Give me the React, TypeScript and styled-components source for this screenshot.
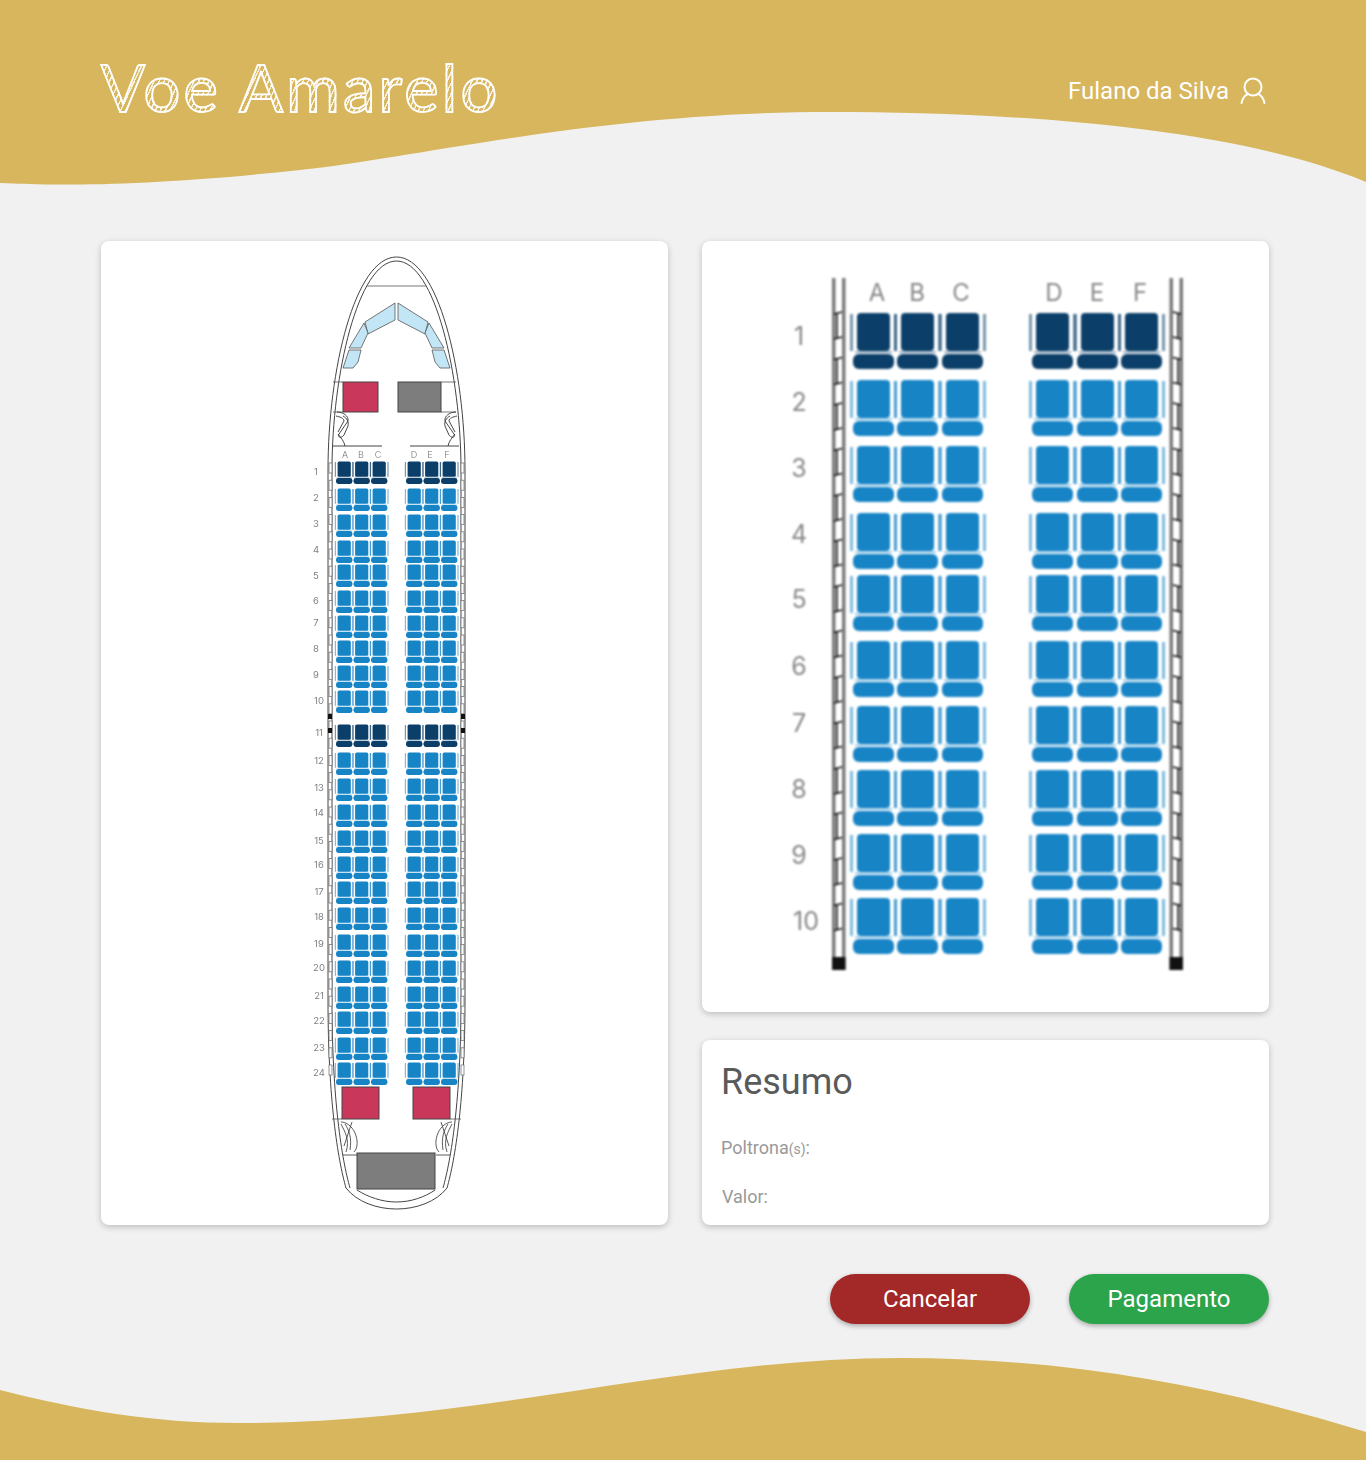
import React from 'react';
import styled, { createGlobalStyle } from 'styled-components';

const BLUE = '#1784c6';
const NAVY = '#0b3f69';

const CUSHION_BIG = [853, 897, 942, 1032, 1077, 1121];
const ROWS_BIG = [314, 381, 447, 514, 576, 642, 707, 771, 835, 899];
const LABEL_BIG = [336, 402, 468, 534, 599, 666, 723, 789, 855, 921];
const LETTERS_BIG: Array<[string, number]> = [['A', 877], ['B', 917], ['C', 961], ['D', 1054], ['E', 1097], ['F', 1140]];

const CUSHION_SMALL = [336, 353.5, 371, 406, 423.5, 441];
const ROWS_SMALL = [462, 489, 515, 541, 565, 591, 616, 641, 666, 691, 725, 753, 779, 805, 831, 857, 882, 908, 935, 961, 987, 1012, 1038, 1063];
const LABEL_SMALL = [471, 497, 523, 549, 575, 600, 622, 648, 674, 700, 732, 760, 787, 812, 840, 864, 891, 916, 943, 967, 995, 1020, 1047, 1072];
const LETTERS_SMALL: Array<[string, number]> = [['A', 345], ['B', 361], ['C', 378], ['D', 414], ['E', 430], ['F', 447]];

function Seat({ x, y, scale, dark }: { x: number; y: number; scale: number; dark: boolean }) {
  const fill = dark ? NAVY : BLUE;
  return (
    <g transform={`translate(${x} ${y}) scale(${scale})`} fill={fill}>
      <rect x={-3} y={0} width={3} height={37} opacity={0.55} />
      <rect x={41} y={0} width={3} height={37} opacity={0.55} />
      <rect x={4} y={-1} width={33} height={38} rx={4} />
      <rect x={2} y={37} width={37} height={2} opacity={0.4} />
      <rect x={0} y={40} width={41} height={15} rx={6} />
    </g>
  );
}

function SeatRows({ rows, columns, scale, darkRows }: { rows: number[]; columns: number[]; scale: number; darkRows: number[] }) {
  return (
    <>
      {rows.map((y, row) =>
        columns.map((x) => (
          <Seat key={`${row}-${x}`} x={x} y={y} scale={scale} dark={darkRows.includes(row)} />
        ))
      )}
    </>
  );
}

// drawn as the left wall, the right one is the same thing mirrored
function BigWall({ mirror }: { mirror: boolean }) {
  const ticks: number[] = [];
  for (let y = 312; y < 930; y += 45.5) ticks.push(y);
  return (
    <g transform={mirror ? 'translate(2015 0) scale(-1 1)' : undefined}>
      <rect x={832} y={278} width={3.5} height={692} fill="#7a7a7a" />
      <rect x={842} y={278} width={3.5} height={692} fill="#7a7a7a" />
      {ticks.map((y) => (
        <path key={y} d={`M834 ${y + 2} L842 ${y} M837 ${y + 1} V${y + 26} M834 ${y + 27} L842 ${y + 25}`} stroke="#111" strokeWidth={1.5} fill="none" />
      ))}
      <rect x={832} y={957} width={13.5} height={13} fill="#111" />
    </g>
  );
}

function Door({ mirror, back }: { mirror: boolean; back: boolean }) {
  const transform = mirror ? 'translate(793 0) scale(-1 1)' : undefined;
  if (back) {
    return (
      <g transform={transform} fill="none" stroke="#333" strokeWidth={0.8}>
        <path d="M341 1122 C346 1122 352 1126 355 1133 C358 1140 358 1148 354 1152" />
        <path d="M345 1124 C349 1130 352 1138 350 1150" />
        <path d="M341 1124 C345 1132 350 1140 346 1152 M352 1122 L344 1146" />
        <path d="M343 1155 H357" />
      </g>
    );
  }
  return (
    <g transform={transform} fill="none" stroke="#333" strokeWidth={0.9}>
      <path d="M337 412 C343 412 349 416 348 421 L339 434 C337 437 341 439 344 435 L348 426 C349 422 347 418 343 416" />
      <path d="M336 416 C340 417 344 418 344 421 L338 432 M338 434 C341 438 344 441 345 446" />
    </g>
  );
}

function PlaneMap() {
  const small: number[] = [];
  for (let y = 463; y < 1070; y += 17.2) small.push(y);
  return (
    <MapSvg viewBox="101 241 567 984" width={567} height={984}>
      <g fill="none" stroke="#444" strokeWidth={1}>
        <path d="M346 1188 C338 1160 328 1100 328 1000 V470 C328 370 355 257 396.5 257 C438 257 465 370 465 470 V1000 C465 1100 455 1160 447 1188 C436 1202 416 1209 396.5 1209 C377 1209 357 1202 346 1188 Z" />
        <path d="M350 1188 C342 1160 332 1100 332 1000 V470 C332 375 358 261 396.5 261 C435 261 461 375 461 470 V1000 C461 1100 451 1160 443 1188" />
        <path d="M357 1190 C368 1197 382 1202 396.5 1202 C411 1202 425 1197 435 1190" />
        <path d="M367 286 H426" stroke="#777" />
        <path d="M333 446 H382 M410 446 H459" />
      </g>

      <g fill="#c3e6f6" stroke="#555" strokeWidth={0.8}>
        <polygon points="395,303 395,320 368,334 365,322" />
        <polygon points="398,303 398,320 425,334 428,322" />
        <polygon points="364,323 368,333 361,348 349,348" />
        <polygon points="429,323 425,333 432,348 444,348" />
        <polygon points="349,350 361,350 358,362 353,368 343,368" />
        <polygon points="444,350 432,350 435,362 440,368 450,368" />
      </g>

      <Box x={343} y={382} width={35} height={30} fill="#c9385a" />
      <Box x={398} y={382} width={43} height={30} fill="#7d7d7d" />
      <Box x={342} y={1087} width={37} height={32} fill="#c9385a" />
      <Box x={413} y={1087} width={37} height={32} fill="#c9385a" />
      <Box x={357} y={1153} width={78} height={36} fill="#7d7d7d" />
      <path d="M441 382 H456 M441 412 H456 M333 382 H343 M333 412 H343 M332 1119 H342 M450 1119 H461" stroke="#555" strokeWidth={0.8} />

      <Door mirror={false} back={false} />
      <Door mirror={true} back={false} />
      <Door mirror={false} back={true} />
      <Door mirror={true} back={true} />

      {small.map((y) => (
        <g key={y} fill="#fff" stroke="#777" strokeWidth={0.8}>
          <rect x={329} y={y} width={3} height={10} />
          <rect x={461} y={y} width={3} height={10} />
        </g>
      ))}
      <path d="M328 714 h4 v5 h-4z M328 728 h4 v5 h-4z M461 714 h4 v5 h-4z M461 728 h4 v5 h-4z" fill="#111" />

      {LETTERS_SMALL.map(([letter, x]) => (
        <SmallLetter key={letter} x={x} y={458}>{letter}</SmallLetter>
      ))}
      {LABEL_SMALL.map((y, i) => (
        <SmallRowNumber key={y} x={i < 9 ? 316 : 319} y={y + 3.5}>{i + 1}</SmallRowNumber>
      ))}
      <SeatRows rows={ROWS_SMALL} columns={CUSHION_SMALL} scale={0.4} darkRows={[0, 10]} />
    </MapSvg>
  );
}

function CloseUpMap() {
  return (
    <CloseUpSvg viewBox="702 241 567 771" width={567} height={771}>
      <BigWall mirror={false} />
      <BigWall mirror={true} />
      {LETTERS_BIG.map(([letter, x]) => (
        <BigLetter key={letter} x={x} y={301}>{letter}</BigLetter>
      ))}
      {LABEL_BIG.map((y, i) => (
        <BigRowNumber key={y} x={i === 9 ? 806 : 799} y={y + 9}>{i + 1}</BigRowNumber>
      ))}
      <SeatRows rows={ROWS_BIG} columns={CUSHION_BIG} scale={1} darkRows={[0]} />
    </CloseUpSvg>
  );
}

export default function App() {
  return (
    <>
      <GlobalStyle />
      <Header>
        <Logo>Voe Amarelo</Logo>
        <UserArea>
          <UserName>Fulano da Silva</UserName>
          <svg width="28" height="30" viewBox="0 0 28 30" fill="none" stroke="#fff" strokeWidth="2" strokeLinecap="round">
            <circle cx="14" cy="11" r="8.5" />
            <path d="M2.5 27 C3.5 21.5 7 18.5 9 18 M25.5 27 C24.5 21.5 21 18.5 19 18" />
          </svg>
        </UserArea>
      </Header>

      <Main>
        <PlaneCard>
          <PlaneMap />
        </PlaneCard>
        <SideColumn>
          <CloseUpCard>
            <CloseUpMap />
          </CloseUpCard>
          <SummaryCard>
            <SummaryTitle>Resumo</SummaryTitle>
            <SummarySeats>Poltrona<small>(s)</small>:</SummarySeats>
            <SummaryPrice>Valor:</SummaryPrice>
          </SummaryCard>
        </SideColumn>
      </Main>

      <Actions>
        <ActionButton $color="#a32828">Cancelar</ActionButton>
        <ActionButton $color="#2ba44b">Pagamento</ActionButton>
      </Actions>

      <Footer />
    </>
  );
}

const GlobalStyle = createGlobalStyle`
  html, body {
    margin: 0;
    padding: 0;
    background: #f1f1f1;
    font-family: Roboto, "Liberation Sans", sans-serif;
  }
`;

const Header = styled.header`
  display: flex;
  align-items: center;
  justify-content: space-between;
  box-sizing: border-box;
  height: 186px;
  padding: 0 99px 4px 101px;
  background: #d7b65d;
  clip-path: path('M0 0 H1366 V182 C1230 125 1000 112 830 112 C600 112 420 157 300 170 C150 186 60 186 0 183 Z');
`;

const Logo = styled.h1`
  margin: 0 0 8px;
  font-family: Lato, sans-serif;
  font-size: 65px;
  line-height: 1;
  font-weight: 400;
  letter-spacing: 3.3px;
  color: transparent;
  -webkit-text-stroke: 1.8px #fff;
  background: repeating-linear-gradient(115deg, rgba(255, 255, 255, 0.8) 0 1.5px, transparent 1.5px 4.5px);
  -webkit-background-clip: text;
  background-clip: text;
`;

const UserArea = styled.div`
  display: flex;
  align-items: center;
  gap: 10px;
  color: #fff;
`;

const UserName = styled.span`
  font-size: 24px;
  font-weight: 400;
`;

const Main = styled.main`
  display: grid;
  grid-template-columns: 567px 567px;
  gap: 34px;
  margin: 55px 0 0 101px;
`;

const Card = styled.section`
  background: #fff;
  border-radius: 8px;
  box-shadow: 0 2px 6px rgba(0, 0, 0, 0.22);
`;

const PlaneCard = styled(Card)`
  height: 984px;
`;

const SideColumn = styled.div`
  display: flex;
  flex-direction: column;
  gap: 28px;
`;

const CloseUpCard = styled(Card)`
  height: 771px;
`;

const SummaryCard = styled(Card)`
  box-sizing: border-box;
  height: 185px;
  padding: 20px;
  color: #999;
  font-size: 18px;
`;

const SummaryTitle = styled.h2`
  margin: 0 0 33px -1px;
  color: #5a5a5a;
  font-size: 36px;
  line-height: 44px;
  font-weight: 400;
`;

const SummarySeats = styled.p`
  margin: 0 0 26px -1px;
  line-height: 21px;

  small {
    font-size: 14px;
  }
`;

const SummaryPrice = styled.p`
  margin: 0;
  line-height: 21px;
`;

const MapSvg = styled.svg`
  display: block;
  filter: blur(0.35px);
`;

const CloseUpSvg = styled(MapSvg)`
  filter: blur(0.9px);
`;

const Box = styled.rect`
  stroke: #444;
  stroke-width: 1;
`;

const SmallLetter = styled.text`
  font-family: Inter, sans-serif;
  font-size: 9px;
  font-weight: 300;
  fill: #777;
  text-anchor: middle;
`;

const SmallRowNumber = styled.text`
  font-family: Inter, sans-serif;
  font-size: 9.5px;
  font-weight: 400;
  fill: #808080;
  text-anchor: middle;
`;

const BigLetter = styled.text`
  font-family: Inter, sans-serif;
  font-size: 24px;
  font-weight: 400;
  fill: #888;
  text-anchor: middle;
`;

const BigRowNumber = styled.text`
  font-family: Inter, sans-serif;
  font-size: 25px;
  font-weight: 400;
  fill: #888;
  text-anchor: middle;
`;

const Actions = styled.div`
  display: flex;
  justify-content: flex-end;
  gap: 39px;
  width: 1269px;
  margin-top: 49px;
`;

const ActionButton = styled.button<{ $color: string }>`
  width: 200px;
  height: 50px;
  border: 0;
  border-radius: 25px;
  background: ${({ $color }) => $color};
  box-shadow: 0 2px 5px rgba(0, 0, 0, 0.3);
  color: #fff;
  font-family: Roboto, sans-serif;
  font-size: 24px;
  font-weight: 400;
`;

const Footer = styled.footer`
  height: 102px;
  margin-top: 34px;
  background: #d7b65d;
  clip-path: path('M0 32 C80 52 150 65 240 65 C480 65 680 0 900 0 C1080 0 1230 32 1366 74 V102 H0 Z');
`;
